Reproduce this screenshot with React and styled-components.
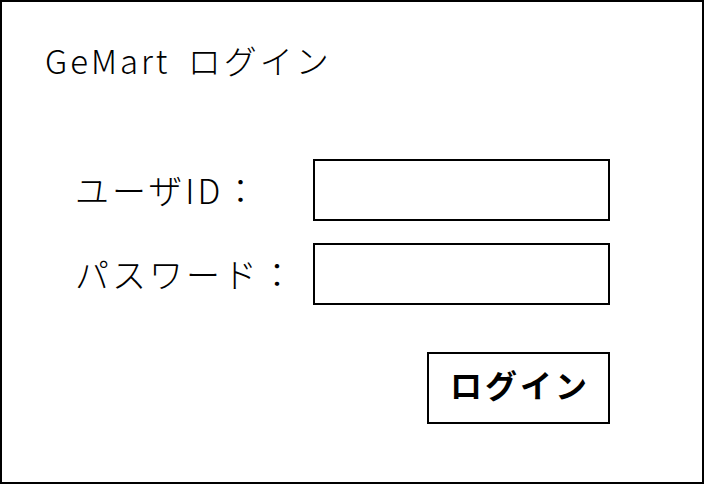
import React from 'react';
import styled, { createGlobalStyle } from 'styled-components';

// --- Styled Components ---
const GlobalStyle = createGlobalStyle`
  body {
    margin: 0;
    background: #fff;
    font-family: 'Noto Sans CJK JP', 'Noto Sans', sans-serif;
    color: #000;
  }
`;

const Frame = styled.div`
  width: 704px;
  height: 484px;
  box-sizing: border-box;
  border: 2px solid #000;
  background: #fff;
`;

const Title = styled.h1`
  margin: 36px 0 0 43px;
  font-size: 33px;
  font-weight: 300;
  line-height: 44px;
  letter-spacing: 3px;
  word-spacing: 7px;
`;

const Form = styled.form`
  display: grid;
  grid-template-columns: 238px 297px;
  row-gap: 22px;
  margin: 77px 0 0 73px;
`;

const Label = styled.label`
  align-self: center;
  font-size: 34px;
  font-weight: 300;
  line-height: 40px;
  letter-spacing: 3px;
  white-space: nowrap;
`;

const Field = styled.input`
  height: 62px;
  box-sizing: border-box;
  border: 2px solid #000;
  border-radius: 0;
  padding: 0 10px;
  font-size: 20px;
  outline: none;
`;

const SubmitButton = styled.button`
  grid-column: 2;
  justify-self: end;
  margin-top: 25px;
  width: 183px;
  height: 72px;
  box-sizing: border-box;
  border: 2px solid #000;
  padding: 0 0 8px 3px;
  background: #fff;
  font-family: inherit;
  font-size: 32px;
  font-weight: 700;
  letter-spacing: 3px;
  cursor: pointer;
`;

// --- Login Page ---
export default function App() {
  return (
    <>
      <GlobalStyle />
      <Frame>
        <Title>GeMart ログイン</Title>
        <Form onSubmit={(e) => e.preventDefault()}>
          <Label htmlFor="uid">ユーザID：</Label>
          <Field id="uid" type="text" />
          <Label htmlFor="pw">パスワード：</Label>
          <Field id="pw" type="password" />
          <SubmitButton type="submit">ログイン</SubmitButton>
        </Form>
      </Frame>
    </>
  );
}
